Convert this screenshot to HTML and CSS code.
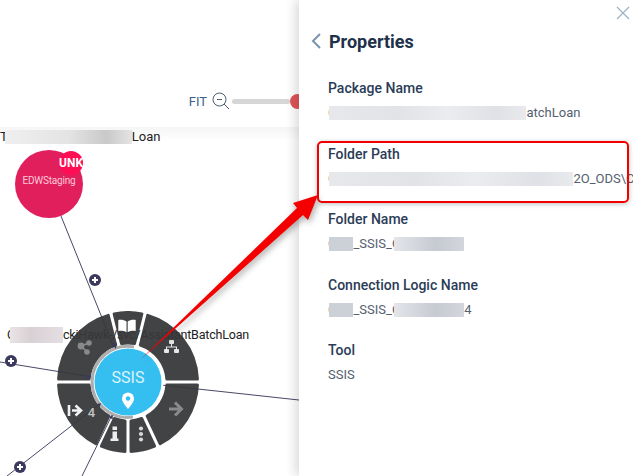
FILE: index.html
```html
<!DOCTYPE html>
<html lang="en">
<head>
    <meta charset="UTF-8">
    <meta name="viewport" content="width=device-width, initial-scale=1.0">
    <title>Properties</title>
    <link rel="stylesheet" href="styles.css">
</head>
<body>
    <div id="app">
        <div id="graph">
            <div class="toolbar">
                <span class="fit">FIT</span>
                <svg class="zoom-icon" width="18" height="18" viewBox="0 0 18 18" fill="none" stroke="#4f5d70" stroke-width="1">
                    <circle cx="7.5" cy="7.5" r="6.5"/>
                    <path d="M5 7.5h5M12 12l5 5"/>
                </svg>
                <div class="slider"><div class="slider-handle"></div></div>
            </div>

            <div id="canvas">
                <!-- edges sit under the labels and the wheel -->
                <svg class="edges" width="299" height="349" viewBox="0 127 299 349" fill="none" stroke="#4a4866" stroke-width="1">
                    <path d="M61 216L115 350"/>
                    <path d="M0 362L92 377"/>
                    <path d="M161 385L299 400"/>
                    <path d="M7 476L102 402"/>
                    <path d="M82 476L113 413"/>
                </svg>

                <div class="node-label label-top">T<span class="blur blur-top"></span>Loan</div>
                <div class="node-label label-mid">C<span class="blur blur-mid"></span>ckiHawk-/svc/AssistantBatchLoan</div>

                <div class="node">
                    <span class="node-name">EDWStaging</span>
                    <span class="node-badge">UNK</span>
                </div>

                <div class="expand expand-a"></div>
                <div class="expand expand-b"></div>
                <div class="expand expand-c"></div>

                <svg class="wheel" width="146" height="146" viewBox="-73 -73 146 146">
                    <g class="segments" fill="#37383a" stroke="#37383a" stroke-width="3" stroke-linejoin="round">
                        <path d="M-13.85-68.1A69.5 69.5 0 0 1 13.85-68.1L6.5-38.45A39 39 0 0 0-6.5-38.45Z"/>
                        <path d="M19.74-66.64A69.5 69.5 0 0 1 69.43-3.03L38.88-2.99A39 39 0 0 0 12.31-37Z"/>
                        <path d="M69.43 3.03A69.5 69.5 0 0 1 32.09 61.65L19.15 33.98A39 39 0 0 0 38.88 2.99Z"/>
                        <path d="M26.6 64.21A69.5 69.5 0 0 1 3.03 69.43L2.99 38.88A39 39 0 0 0 13.72 36.51Z"/>
                        <path d="M-3.03 69.43A69.5 69.5 0 0 1-26.6 64.21L-13.72 36.51A39 39 0 0 0-2.99 38.88Z"/>
                        <path d="M-32.09 61.65A69.5 69.5 0 0 1-69.43 3.03L-38.88 2.99A39 39 0 0 0-19.15 33.98Z"/>
                        <path d="M-69.43-3.03A69.5 69.5 0 0 1-19.74-66.64L-12.31-37A39 39 0 0 0-38.88-2.99Z"/>
                    </g>

                    <!-- progress ring and hub -->
                    <circle r="35.5" fill="#fff"/>
                    <path d="M6-35A35.5 35.5 0 1 0 5 35" fill="none" stroke="#adadad" stroke-width="3"/>
                    <circle r="33.5" fill="#35bef0"/>
                    <text class="hub-text" y="0.5" text-anchor="middle">SSIS</text>
                    <path d="M0 27C-4 22-6 19.5-6 16.5A6 6 0 0 1 6 16.5C6 19.5 4 22 0 27Z" fill="#fff"/>
                    <circle cy="16.5" r="2.2" fill="#35bef0"/>

                    <!-- edge arrowheads landing on the ring -->
                    <g fill="#3d3b5c">
                        <path d="M-12-33L-16-38L-11.500-39Z"/>
                        <path d="M-37-5L-43-8L-43-2.500Z"/>
                        <path d="M-27 21L-31 22L-28.500 25.500Z"/>
                        <path d="M-15 33L-19 35L-15.500 37.500Z"/>
                    </g>

                    <!-- book -->
                    <path d="M-1.500-60.500C-3.500-62-7-62.500-9.700-62V-51C-7-51.500-3.500-51-1.500-49.800ZM-0.300-60.500C1.700-62 5-62.500 7.700-62V-51C5-51.500 1.700-51-0.300-49.800Z" fill="#fff"/>
                    <!-- hierarchy -->
                    <g fill="#e8e8e8">
                        <rect x="41" y="-42" width="5" height="4" rx="1"/>
                        <rect x="36" y="-33" width="5" height="4" rx="1"/>
                        <rect x="46" y="-33" width="5" height="4" rx="1"/>
                        <path d="M43-38h1v2.500h5V-33h-1v-1.500h-9V-33h-1v-2.500h5Z"/>
                    </g>
                    <!-- share -->
                    <g fill="#8a8a8a" stroke="#8a8a8a" stroke-width="1.600">
                        <circle cx="-47" cy="-36" r="2.600"/>
                        <circle cx="-39" cy="-39" r="2"/>
                        <circle cx="-41" cy="-30" r="2"/>
                        <path d="M-47-36L-39-39M-47-36L-41-30" fill="none"/>
                    </g>
                    <!-- arrow right -->
                    <path d="M41 27H53M47 20.500L53.500 27L47 33.500" fill="none" stroke="#8a8a8a" stroke-width="3"/>
                    <!-- dots -->
                    <g fill="#d8d8d8">
                        <circle cx="13" cy="46.500" r="2.100"/>
                        <circle cx="13" cy="52" r="2.100"/>
                        <circle cx="13" cy="57.500" r="2.100"/>
                    </g>
                    <!-- info -->
                    <path d="M-15.500 44.500H-11V48H-15.500ZM-15.500 49.500H-11V56.500H-9.500V59H-17.500V56.500H-15.500Z" fill="#eee"/>
                    <!-- exit arrow -->
                    <path d="M-59 23V34M-56 28.500H-48M-52.500 23.500L-47 28.500L-52.500 33.500" fill="none" stroke="#f2f2f2" stroke-width="2.600"/>
                    <text class="count-text" x="-36.500" y="34.500" text-anchor="middle">4</text>
                </svg>
            </div>
        </div>

        <div id="panel">
            <div class="close-row">
                <svg width="14" height="14" viewBox="0 0 14 14" fill="none" stroke="#9db1c5" stroke-width="1.200"><path d="M1 1L13 13M13 1L1 13"/></svg>
            </div>
            <div class="panel-title">
                <svg width="10" height="16" viewBox="0 0 10 16" fill="none" stroke="#7b94ad" stroke-width="2"><path d="M9 1L2 8L9 15"/></svg>
                <h2>Properties</h2>
            </div>

            <div class="field">
                <div class="field-label">Package Name</div>
                <div class="field-value">C<span class="blur blur-package"></span>atchLoan</div>
            </div>
            <div class="field">
                <div class="field-label">Folder Path</div>
                <div class="field-value">C<span class="blur blur-path"></span>2O_ODS\C</div>
            </div>
            <div class="field">
                <div class="field-label">Folder Name</div>
                <div class="field-value">C<span class="blur blur-short"></span>_SSIS_C<span class="blur blur-name"></span></div>
            </div>
            <div class="field">
                <div class="field-label">Connection Logic Name</div>
                <div class="field-value">C<span class="blur blur-short"></span>_SSIS_C<span class="blur blur-name"></span>4</div>
            </div>
            <div class="field">
                <div class="field-label">Tool</div>
                <div class="field-value">SSIS</div>
            </div>

            <div class="highlight"></div>
        </div>

        <!-- callout arrow drawn on top of the screenshot -->
        <svg class="callout" width="633" height="476" viewBox="0 0 633 476">
            <path d="M140 360L297 208L293 203L318 195L308 220L303 215Z" fill="#f40000"/>
        </svg>
    </div>
</body>
</html>
```

FILE: styles.css
```css
html, body {
    margin: 0;
    height: 100%;
    overflow: hidden;
}

body {
    font-family: Roboto, "Liberation Sans", sans-serif;
    background-color: #fff;
}

#app {
    position: relative;
    display: flex;
    width: 633px;
    height: 476px;
    overflow: hidden;
}

#graph {
    width: 299px;
    flex-shrink: 0;
}

.toolbar {
    display: flex;
    justify-content: flex-end;
    align-items: center;
    box-sizing: border-box;
    height: 127px;
    padding-top: 77px;
    padding-bottom: 2px;
    background-color: #fff;
}

.fit {
    font-size: 13px;
    color: #3f5f86;
    margin-right: 5px;
}

.zoom-icon {
    margin-right: 2px;
}

.slider {
    position: relative;
    width: 58px;
    height: 5px;
    margin-right: 9px;
    border-radius: 3px;
    background-color: #d6d6d6;
}

.slider-handle {
    position: absolute;
    left: 58px;
    top: -5px;
    width: 15px;
    height: 15px;
    border-radius: 50%;
    background-color: #e0555a;
}

#canvas {
    position: relative;
    height: 349px;
    background: linear-gradient(#f5f5f5, #fff 14px);
}

.edges {
    position: absolute;
    left: 0;
    top: 0;
}

.node-label {
    position: absolute;
    font-size: 13px;
    line-height: 16px;
    color: #222;
    white-space: nowrap;
}

.label-top {
    left: 0;
    top: 2px;
}

.label-mid {
    left: 7px;
    top: 200px;
    font-size: 12.5px;
    letter-spacing: -0.2px;
}

.node {
    position: absolute;
    left: 15px;
    top: 23px;
    width: 68px;
    height: 68px;
    border-radius: 50%;
    background-color: #e01f5c;
    text-align: center;
}

.node-name {
    display: block;
    margin-top: 24px;
    font-size: 10px;
    line-height: 14px;
    letter-spacing: -0.2px;
    color: #ffc9d9;
}

.node-badge {
    position: absolute;
    left: 44px;
    top: 1px;
    width: 24px;
    height: 24px;
    border-radius: 50%;
    background-color: #ff0d55;
    font-size: 12px;
    font-weight: 700;
    line-height: 24px;
    color: #fff;
}

.expand {
    position: absolute;
    width: 12px;
    height: 12px;
    border-radius: 50%;
    background-color: #3b3a5e;
}

.expand::before, .expand::after {
    content: "";
    position: absolute;
    background-color: #fff;
}

.expand::before {
    left: 3px;
    top: 5px;
    width: 6px;
    height: 2px;
}

.expand::after {
    left: 5px;
    top: 3px;
    width: 2px;
    height: 6px;
}

.expand-a {
    left: 89px;
    top: 147px;
}

.expand-b {
    left: 5px;
    top: 228px;
}

.expand-c {
    left: 14px;
    top: 334px;
}

.wheel {
    position: absolute;
    left: 55px;
    top: 182px;
}

.segments {
    opacity: 0.94;
}

.hub-text {
    font-size: 16px;
    fill: #dcf4fd;
}

.count-text {
    font-size: 13px;
    font-weight: 500;
    fill: #c4c4c4;
}

#panel {
    position: relative;
    flex: 1;
    box-sizing: border-box;
    padding-left: 29px;
    background-color: #fff;
    box-shadow: -4px 0 10px rgba(0, 0, 0, 0.14);
    overflow: hidden;
}

.close-row {
    display: flex;
    justify-content: flex-end;
    padding: 6px 3px 0 0;
    height: 20px;
}

.panel-title {
    display: flex;
    align-items: center;
    height: 30px;
    margin-left: -17px;
    margin-bottom: 22px;
}

.panel-title svg {
    margin-right: 8px;
}

.panel-title h2 {
    margin: 0;
    font-size: 18px;
    font-weight: 700;
    color: #21314a;
}

.field {
    margin-bottom: 20.25px;
}

.field-label {
    font-size: 14px;
    font-weight: 500;
    line-height: 20px;
    color: #2b3c57;
}

.field-value {
    margin-top: 5.25px;
    font-size: 13px;
    line-height: 20px;
    color: #56606f;
    white-space: nowrap;
}

.blur {
    display: inline-block;
    height: 14px;
    vertical-align: -3px;
    background: linear-gradient(90deg, #e6e8eb, #e1e3e7 35%, #ebecef 60%, #dfe1e6 85%, #e9eaed);
    filter: blur(0.5px);
}

.blur-top {
    width: 127px;
    margin-left: -3px;
    background: linear-gradient(90deg, #efeff0, #e4e4e5 50%, #c9c9ca 80%, #e4e4e4);
}

.blur-mid {
    width: 53px;
    height: 16px;
    vertical-align: -4px;
    margin-left: -5px;
    background: linear-gradient(90deg, #e9e4e6, #d8d0d4 40%, #e4dfe2);
}

.blur-package {
    width: 197px;
    margin-left: -7px;
}

.blur-path {
    width: 244px;
    margin-left: -7px;
}

.blur-short {
    width: 24px;
    margin-left: -7px;
    background: #ccd0d7;
}

.blur-name {
    width: 70px;
    margin-left: -6px;
    background: linear-gradient(90deg, #e3e5e9, #c6cad1 60%, #d3d6dc);
}

.highlight {
    position: absolute;
    left: 18px;
    top: 141px;
    box-sizing: border-box;
    width: 312px;
    height: 62px;
    border: 2px solid #f00000;
    border-radius: 5px;
    box-shadow: 0 1px 5px rgba(0, 0, 0, 0.25);
}

.callout {
    position: absolute;
    left: 0;
    top: 0;
    filter: drop-shadow(2px 3px 3px rgba(0, 0, 0, 0.3));
    pointer-events: none;
}
```
